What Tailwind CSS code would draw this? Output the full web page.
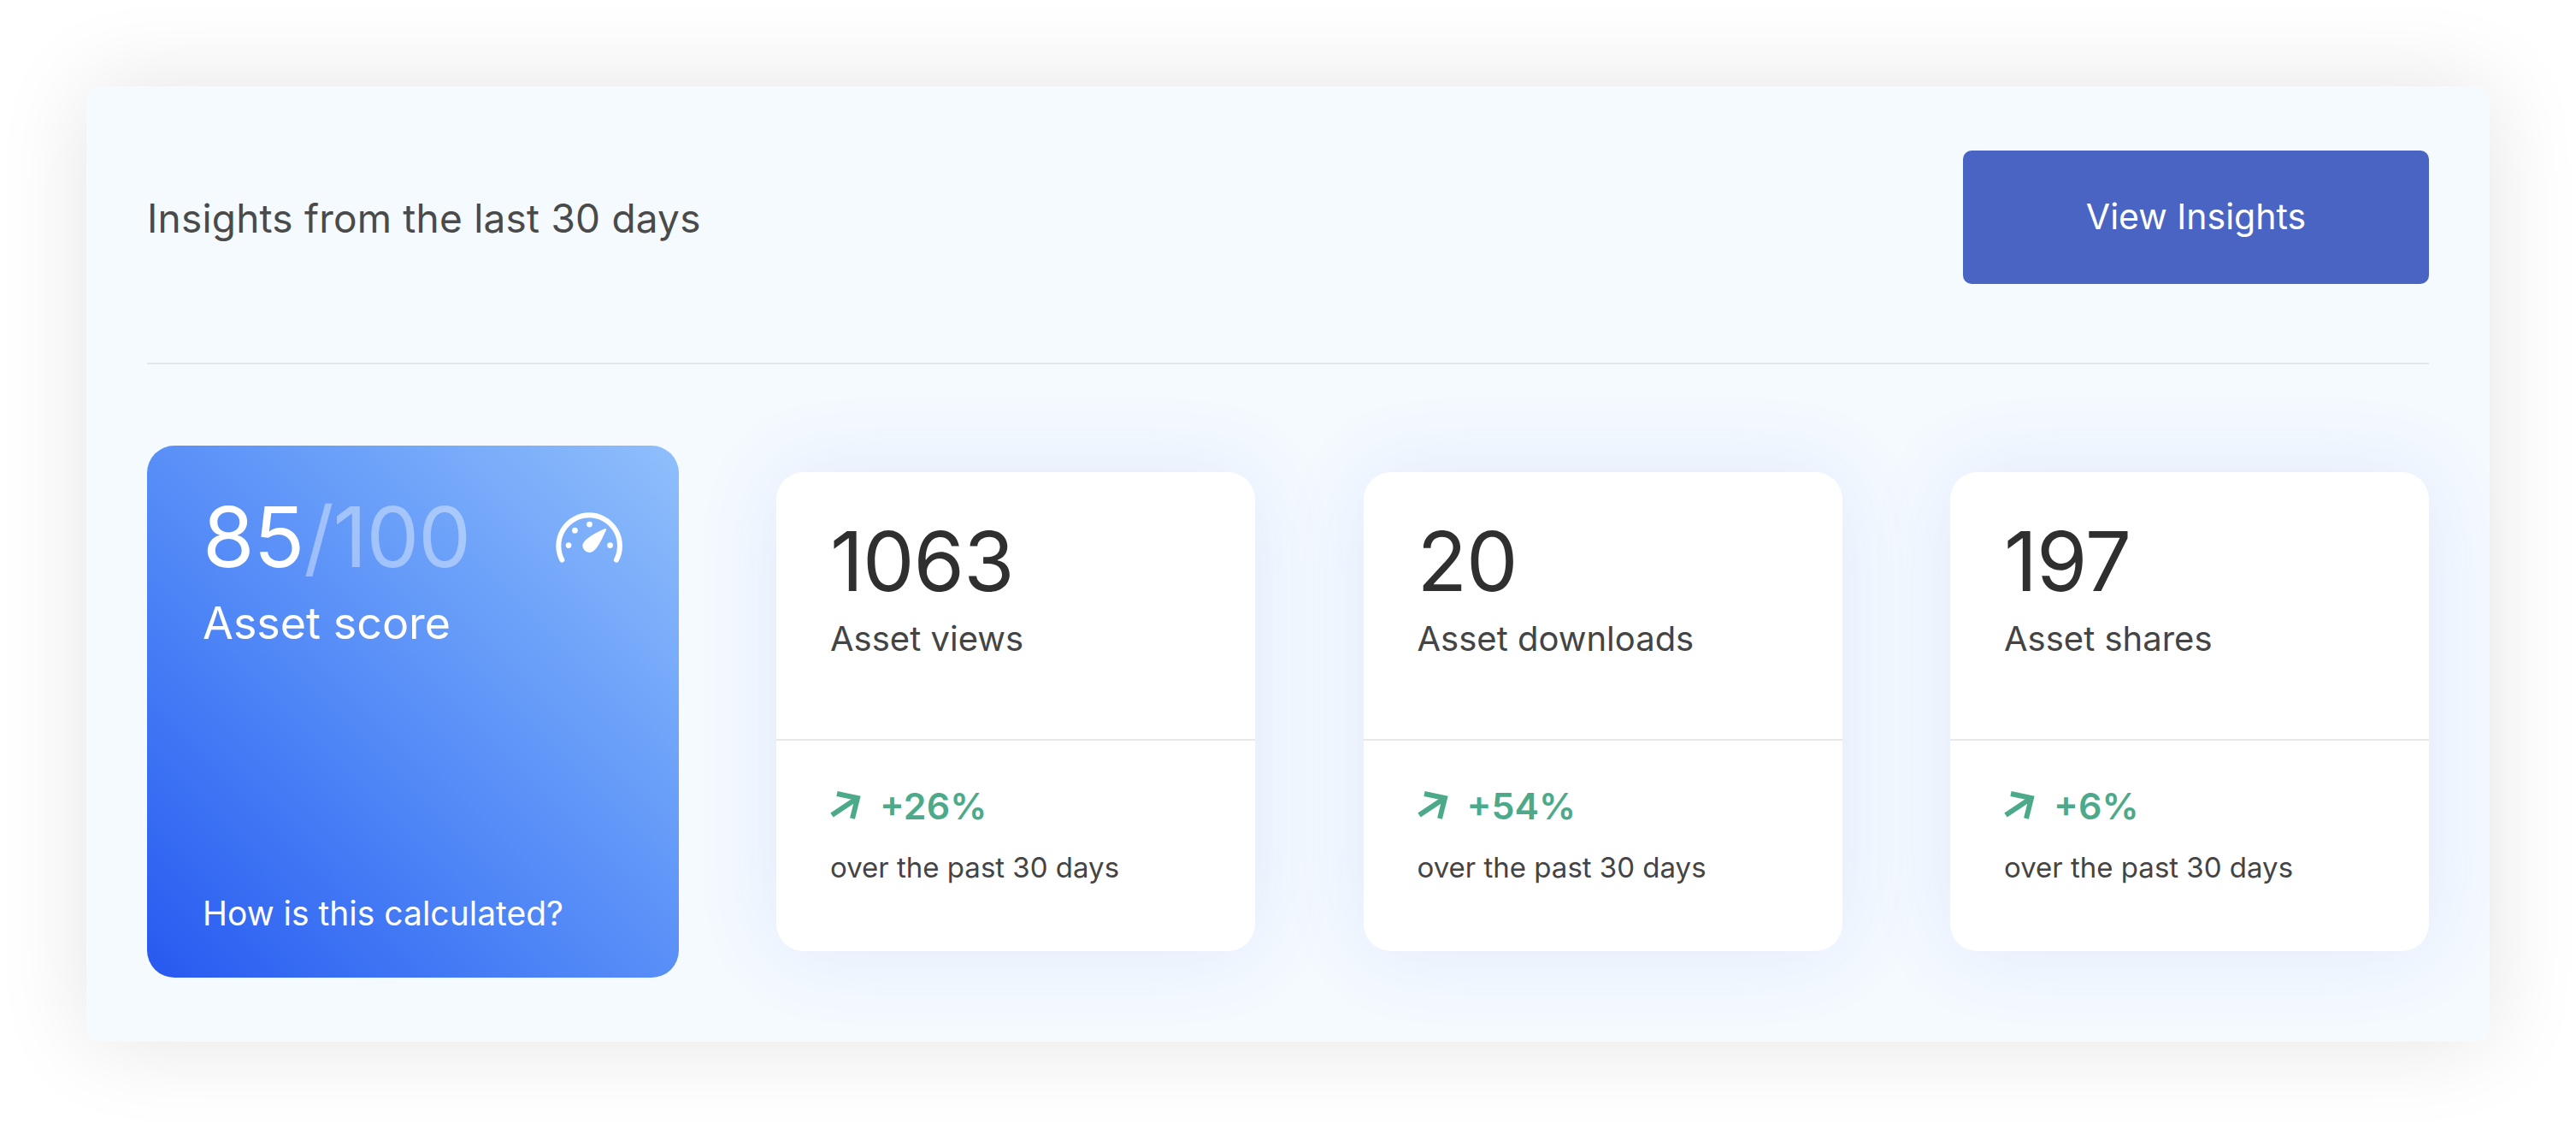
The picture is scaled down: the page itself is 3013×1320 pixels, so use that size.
<!DOCTYPE html>
<html>
<head>
<meta charset="utf-8">
<script src="https://cdn.jsdelivr.net/npm/@tailwindcss/browser@4"></script>
</head>
<body class="bg-white font-['Inter',sans-serif]">
<div class="w-[3013px] h-[1320px] pt-[101px] pl-[101px] overflow-hidden">
  <main class="w-[2811px] h-[1117px] rounded-[16px] bg-[#f5faff] px-[71px] shadow-[0_0_110px_rgba(0,0,0,0.11)]">
    <header class="h-[325px] border-b-2 border-[#e3e6ea] flex items-start justify-between">
      <h1 class="mt-[126px] text-[46px] leading-[56px] text-[#4a4a4a] tracking-[0.2px]">Insights from the last 30 days</h1>
      <button class="mt-[75px] w-[545px] h-[156px] rounded-[10px] bg-[#4a64c3] text-white text-[41px]">View Insights</button>
    </header>
    <section class="mt-[95px] flex items-center">
      <div class="w-[622px] h-[622px] rounded-[32px] bg-gradient-to-tr from-[#2858f0] to-[#90bffb] px-[65px] pt-[52px] pb-[51px] flex flex-col text-white shrink-0">
        <div class="flex items-center justify-between">
          <div class="text-[98px] leading-[110px] tracking-[-1px]">85<span class="text-white/40">/100</span></div>
          <svg class="w-[82px] h-[62px] -mr-[2px]" viewBox="100 30 245 185" fill="none">
            <path d="M125 202A107 107 0 1 1 315 202" stroke="#fff" stroke-width="18" stroke-linecap="round"/>
            <circle cx="148" cy="151" r="10" fill="#fff"/><circle cx="170" cy="99" r="10" fill="#fff"/><circle cx="221" cy="78" r="10" fill="#fff"/><circle cx="293" cy="151" r="10" fill="#fff"/>
            <path d="M197 152C197 130 250 103 274 93C280 91 281 96 278 101C266 125 246 176 222 176C208 176 197 166 197 152Z" fill="#fff"/>
          </svg>
        </div>
        <div class="mt-[14px] text-[52px] leading-[64px]">Asset score</div>
        <div class="mt-auto text-[39px] leading-[48px]">How is this calculated?</div>
      </div>
      <div class="ml-[114px] flex-1 flex justify-between">
        <article class="w-[560px] h-[560px] rounded-[32px] bg-white shadow-[0_0_100px_rgba(50,90,210,0.11)] flex flex-col text-[#444]">
          <div class="h-[314px] border-b-2 border-[#e8e8e8] px-[63px] pt-[49px]">
            <div class="text-[96px] leading-[110px] text-[#2f2f2f] tracking-[-1px]">1063</div>
            <div class="mt-[12px] text-[40px] leading-[48px]">Asset views</div>
          </div>
          <div class="px-[63px] pt-[50px]">
            <div class="flex items-center gap-[22px] text-[#4caa8a] font-semibold text-[43px] leading-[52px]">
              <svg class="w-[36px] h-[36px]" viewBox="0 0 36 36" fill="none" stroke="#4caa8a" stroke-width="6"><path d="M2 29L32 9M8 4L32 9L26 33"/></svg>
              <span>+26%</span>
            </div>
            <div class="mt-[24px] text-[33px] leading-[44px]">over the past 30 days</div>
          </div>
        </article>
        <article class="w-[560px] h-[560px] rounded-[32px] bg-white shadow-[0_0_100px_rgba(50,90,210,0.11)] flex flex-col text-[#444]">
          <div class="h-[314px] border-b-2 border-[#e8e8e8] px-[63px] pt-[49px]">
            <div class="text-[96px] leading-[110px] text-[#2f2f2f] tracking-[-1px]">20</div>
            <div class="mt-[12px] text-[40px] leading-[48px]">Asset downloads</div>
          </div>
          <div class="px-[63px] pt-[50px]">
            <div class="flex items-center gap-[22px] text-[#4caa8a] font-semibold text-[43px] leading-[52px]">
              <svg class="w-[36px] h-[36px]" viewBox="0 0 36 36" fill="none" stroke="#4caa8a" stroke-width="6"><path d="M2 29L32 9M8 4L32 9L26 33"/></svg>
              <span>+54%</span>
            </div>
            <div class="mt-[24px] text-[33px] leading-[44px]">over the past 30 days</div>
          </div>
        </article>
        <article class="w-[560px] h-[560px] rounded-[32px] bg-white shadow-[0_0_100px_rgba(50,90,210,0.11)] flex flex-col text-[#444]">
          <div class="h-[314px] border-b-2 border-[#e8e8e8] px-[63px] pt-[49px]">
            <div class="text-[96px] leading-[110px] text-[#2f2f2f] tracking-[-1px]">197</div>
            <div class="mt-[12px] text-[40px] leading-[48px]">Asset shares</div>
          </div>
          <div class="px-[63px] pt-[50px]">
            <div class="flex items-center gap-[22px] text-[#4caa8a] font-semibold text-[43px] leading-[52px]">
              <svg class="w-[36px] h-[36px]" viewBox="0 0 36 36" fill="none" stroke="#4caa8a" stroke-width="6"><path d="M2 29L32 9M8 4L32 9L26 33"/></svg>
              <span>+6%</span>
            </div>
            <div class="mt-[24px] text-[33px] leading-[44px]">over the past 30 days</div>
          </div>
        </article>
      </div>
    </section>
  </main>
</div>
</body>
</html>
